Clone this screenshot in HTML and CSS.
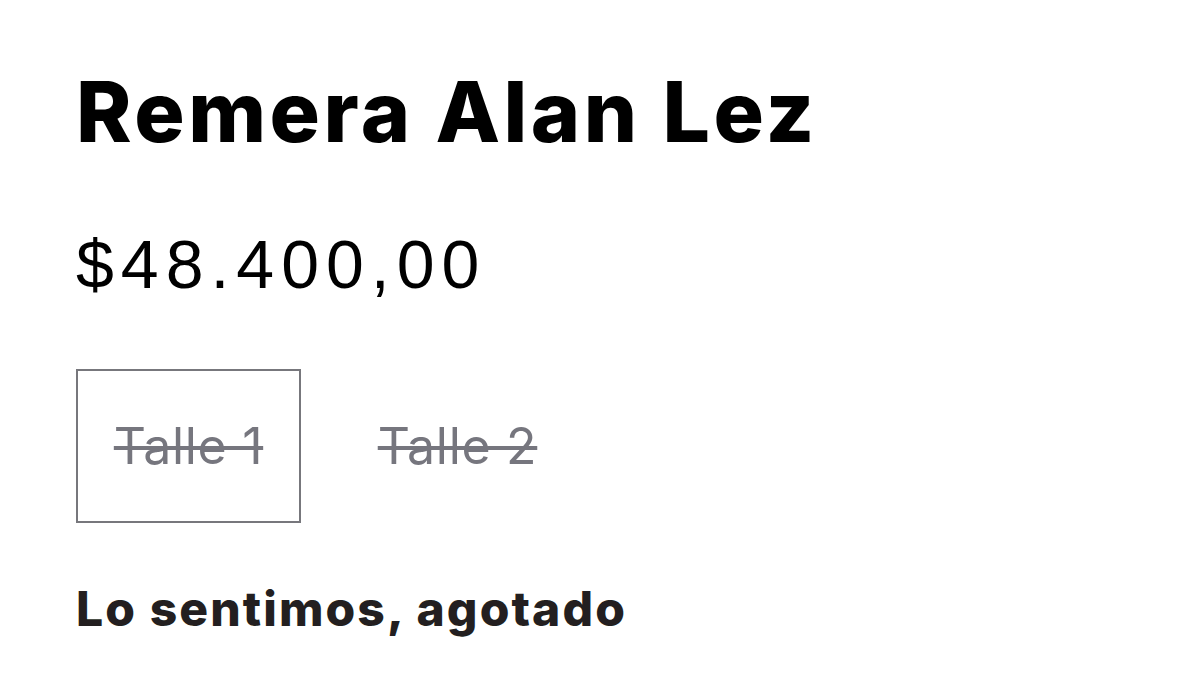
FILE: index.html
```html
<!DOCTYPE html>
<html lang="es">
<head>
<meta charset="utf-8">
<title>Remera Alan Lez</title>
<link rel="stylesheet" href="styles.css">
</head>
<body>
<main class="product">
  <h1 class="title">Remera Alan Lez</h1>
  <div class="price">$48.400,00</div>
  <div class="variants">
    <button class="variant selected"><span>Talle 1</span></button>
    <button class="variant"><span>Talle 2</span></button>
  </div>
  <p class="soldout">Lo sentimos, agotado</p>
</main>
</body>
</html>
```
FILE: styles.css
```css
html, body {
  margin: 0;
  padding: 0;
  background: #ffffff;
}
.product {
  padding: 62px 0 0 76px;
  display: flex;
  flex-direction: column;
  align-items: flex-start;
}
.title {
  margin: 0;
  font-family: "Inter", sans-serif;
  font-weight: 800;
  font-size: 84px;
  line-height: 100px;
  letter-spacing: 3.5px;
  color: #000;
}
.price {
  margin-top: 62px;
  font-family: "Liberation Sans", Arial, sans-serif;
  font-size: 68px;
  line-height: 80px;
  letter-spacing: 7px;
  color: #000;
}
.variants {
  margin-top: 65px;
  display: flex;
  gap: 44px;
}
.variant {
  width: 225px;
  height: 154px;
  box-sizing: border-box;
  border: 2px solid transparent;
  background: #fff;
  padding: 0;
  margin: 0;
  display: flex;
  align-items: center;
  justify-content: center;
  font-family: "Inter", sans-serif;
  font-size: 50px;
  letter-spacing: 0.7px;
  color: #76767e;
  text-decoration: line-through;
  text-decoration-thickness: 4px;
}
.variant.selected {
  border-color: #77777c;
}
.soldout {
  margin: 56px 0 0;
  font-family: "Inter", sans-serif;
  font-weight: 800;
  font-size: 48px;
  line-height: 60px;
  letter-spacing: 2.1px;
  color: #231f20;
}
```
